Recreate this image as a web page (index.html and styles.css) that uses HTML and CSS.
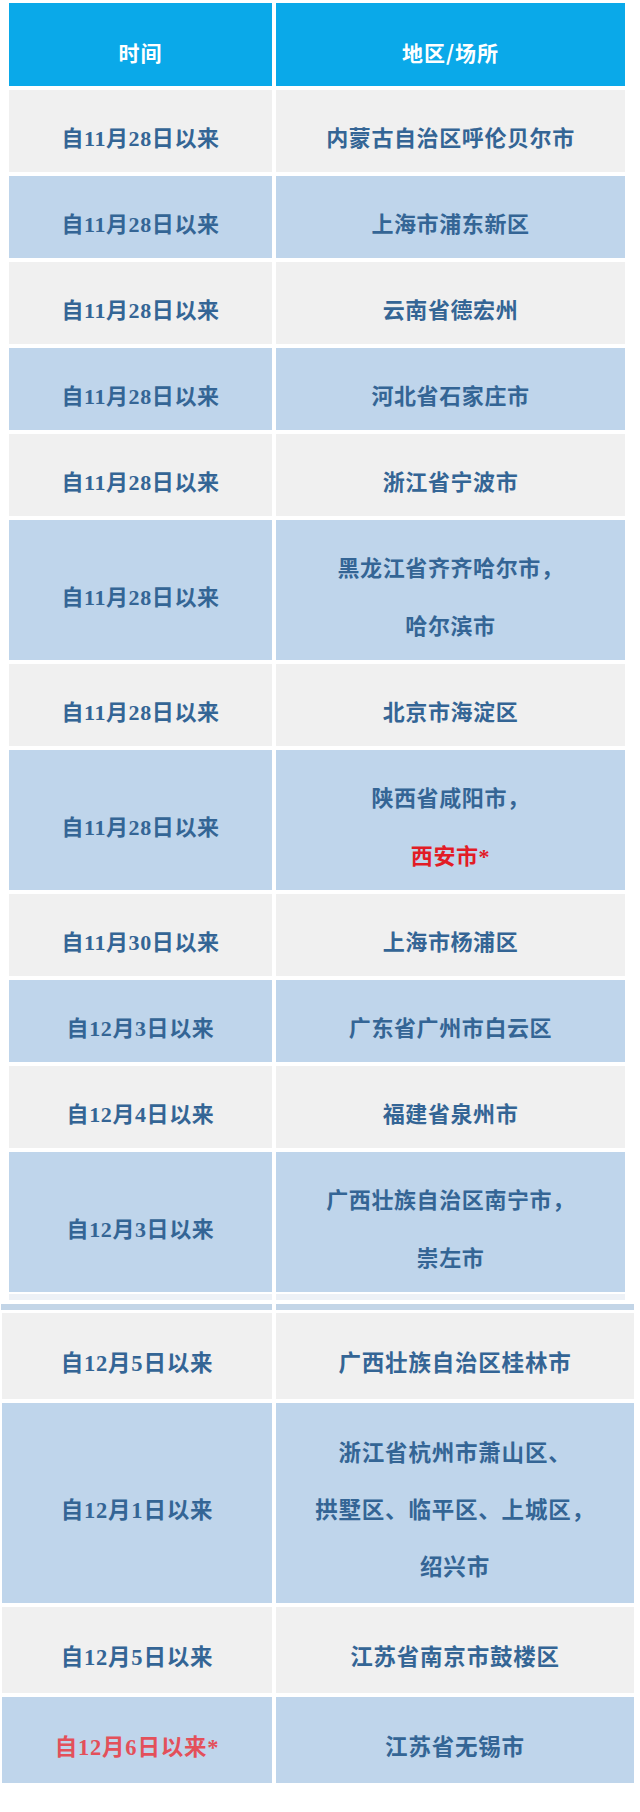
FILE: index.html
```html
<!DOCTYPE html>
<html lang="zh-CN">
<head>
<meta charset="utf-8">
<title>时间 地区/场所</title>
<link rel="stylesheet" href="styles.css">
</head>
<body>
<div class="page">
  <div class="grid upper">
    <div class="cell head"><div>时间</div></div>
    <div class="cell head"><div>地区/场所</div></div>

    <div class="cell gray"><div>自11月28日以来</div></div>
    <div class="cell gray"><div>内蒙古自治区呼伦贝尔市</div></div>

    <div class="cell blue"><div>自11月28日以来</div></div>
    <div class="cell blue"><div>上海市浦东新区</div></div>

    <div class="cell gray"><div>自11月28日以来</div></div>
    <div class="cell gray"><div>云南省德宏州</div></div>

    <div class="cell blue"><div>自11月28日以来</div></div>
    <div class="cell blue"><div>河北省石家庄市</div></div>

    <div class="cell gray"><div>自11月28日以来</div></div>
    <div class="cell gray"><div>浙江省宁波市</div></div>

    <div class="cell blue"><div>自11月28日以来</div></div>
    <div class="cell blue"><div>黑龙江省齐齐哈尔市，<br>哈尔滨市</div></div>

    <div class="cell gray"><div>自11月28日以来</div></div>
    <div class="cell gray"><div>北京市海淀区</div></div>

    <div class="cell blue"><div>自11月28日以来</div></div>
    <div class="cell blue"><div>陕西省咸阳市，<br><span class="red">西安市*</span></div></div>

    <div class="cell gray"><div>自11月30日以来</div></div>
    <div class="cell gray"><div>上海市杨浦区</div></div>

    <div class="cell blue"><div>自12月3日以来</div></div>
    <div class="cell blue"><div>广东省广州市白云区</div></div>

    <div class="cell gray"><div>自12月4日以来</div></div>
    <div class="cell gray"><div>福建省泉州市</div></div>

    <div class="cell blue"><div>自12月3日以来</div></div>
    <div class="cell blue"><div>广西壮族自治区南宁市，<br>崇左市</div></div>
  </div>

  <div class="grid strip-light">
    <div></div><div></div>
  </div>
  <div class="grid strip-blue">
    <div></div><div></div>
  </div>

  <div class="grid lower">
    <div class="cell gray"><div>自12月5日以来</div></div>
    <div class="cell gray"><div>广西壮族自治区桂林市</div></div>

    <div class="cell blue"><div>自12月1日以来</div></div>
    <div class="cell blue"><div>浙江省杭州市萧山区、<br>拱墅区、临平区、上城区，<br>绍兴市</div></div>

    <div class="cell gray"><div>自12月5日以来</div></div>
    <div class="cell gray"><div>江苏省南京市鼓楼区</div></div>

    <div class="cell blue"><div class="pink">自12月6日以来*</div></div>
    <div class="cell blue"><div>江苏省无锡市</div></div>
  </div>
</div>
</body>
</html>
```

FILE: styles.css
```css
html, body {
  margin: 0;
  padding: 0;
  background: #ffffff;
}

.page {
  width: 640px;
  height: 1812px;
  padding-top: 3px;
  box-sizing: border-box;
}

.grid {
  display: grid;
  column-gap: 4px;
  row-gap: 4px;
}

.upper,
.strip-light {
  margin-left: 9px;
  width: 616px;
  grid-template-columns: 263px 349px;
}

.lower {
  margin-left: 2px;
  width: 632px;
  grid-template-columns: 270px 358px;
}

.strip-blue {
  margin-left: 1px;
  width: 633px;
  grid-template-columns: 271px 358px;
}

.cell {
  display: flex;
  align-items: center;
  justify-content: center;
  text-align: center;
  font-family: "Liberation Serif", "Noto Sans CJK SC", serif;
  font-weight: 700;
  font-size: 22px;
  letter-spacing: 0.6px;
  color: #346595;
}

.upper .cell {
  padding: 20px 0 4px;
  line-height: 58px;
}

.upper .cell.head {
  padding: 20px 0 5px;
  background: #0aa9e9;
  color: #ffffff;
  font-family: "Noto Sans CJK SC", sans-serif;
  font-weight: 700;
  font-size: 21px;
  letter-spacing: 1px;
}

.lower .cell {
  padding: 22px 0 7px;
  line-height: 57px;
  font-size: 22.5px;
  letter-spacing: 0.8px;
}

.gray {
  background: #f0f0f0;
}

.blue {
  background: #bfd5eb;
}

.red {
  color: #e21c26;
}

.pink {
  color: #e3505a;
}

.strip-light {
  margin-top: 2px;
  height: 6px;
}

.strip-light div {
  background: #edf1f6;
}

.strip-blue {
  margin-top: 4px;
  height: 6px;
}

.strip-blue div {
  background: #c3d5e7;
}

.lower {
  margin-top: 3px;
}
```
